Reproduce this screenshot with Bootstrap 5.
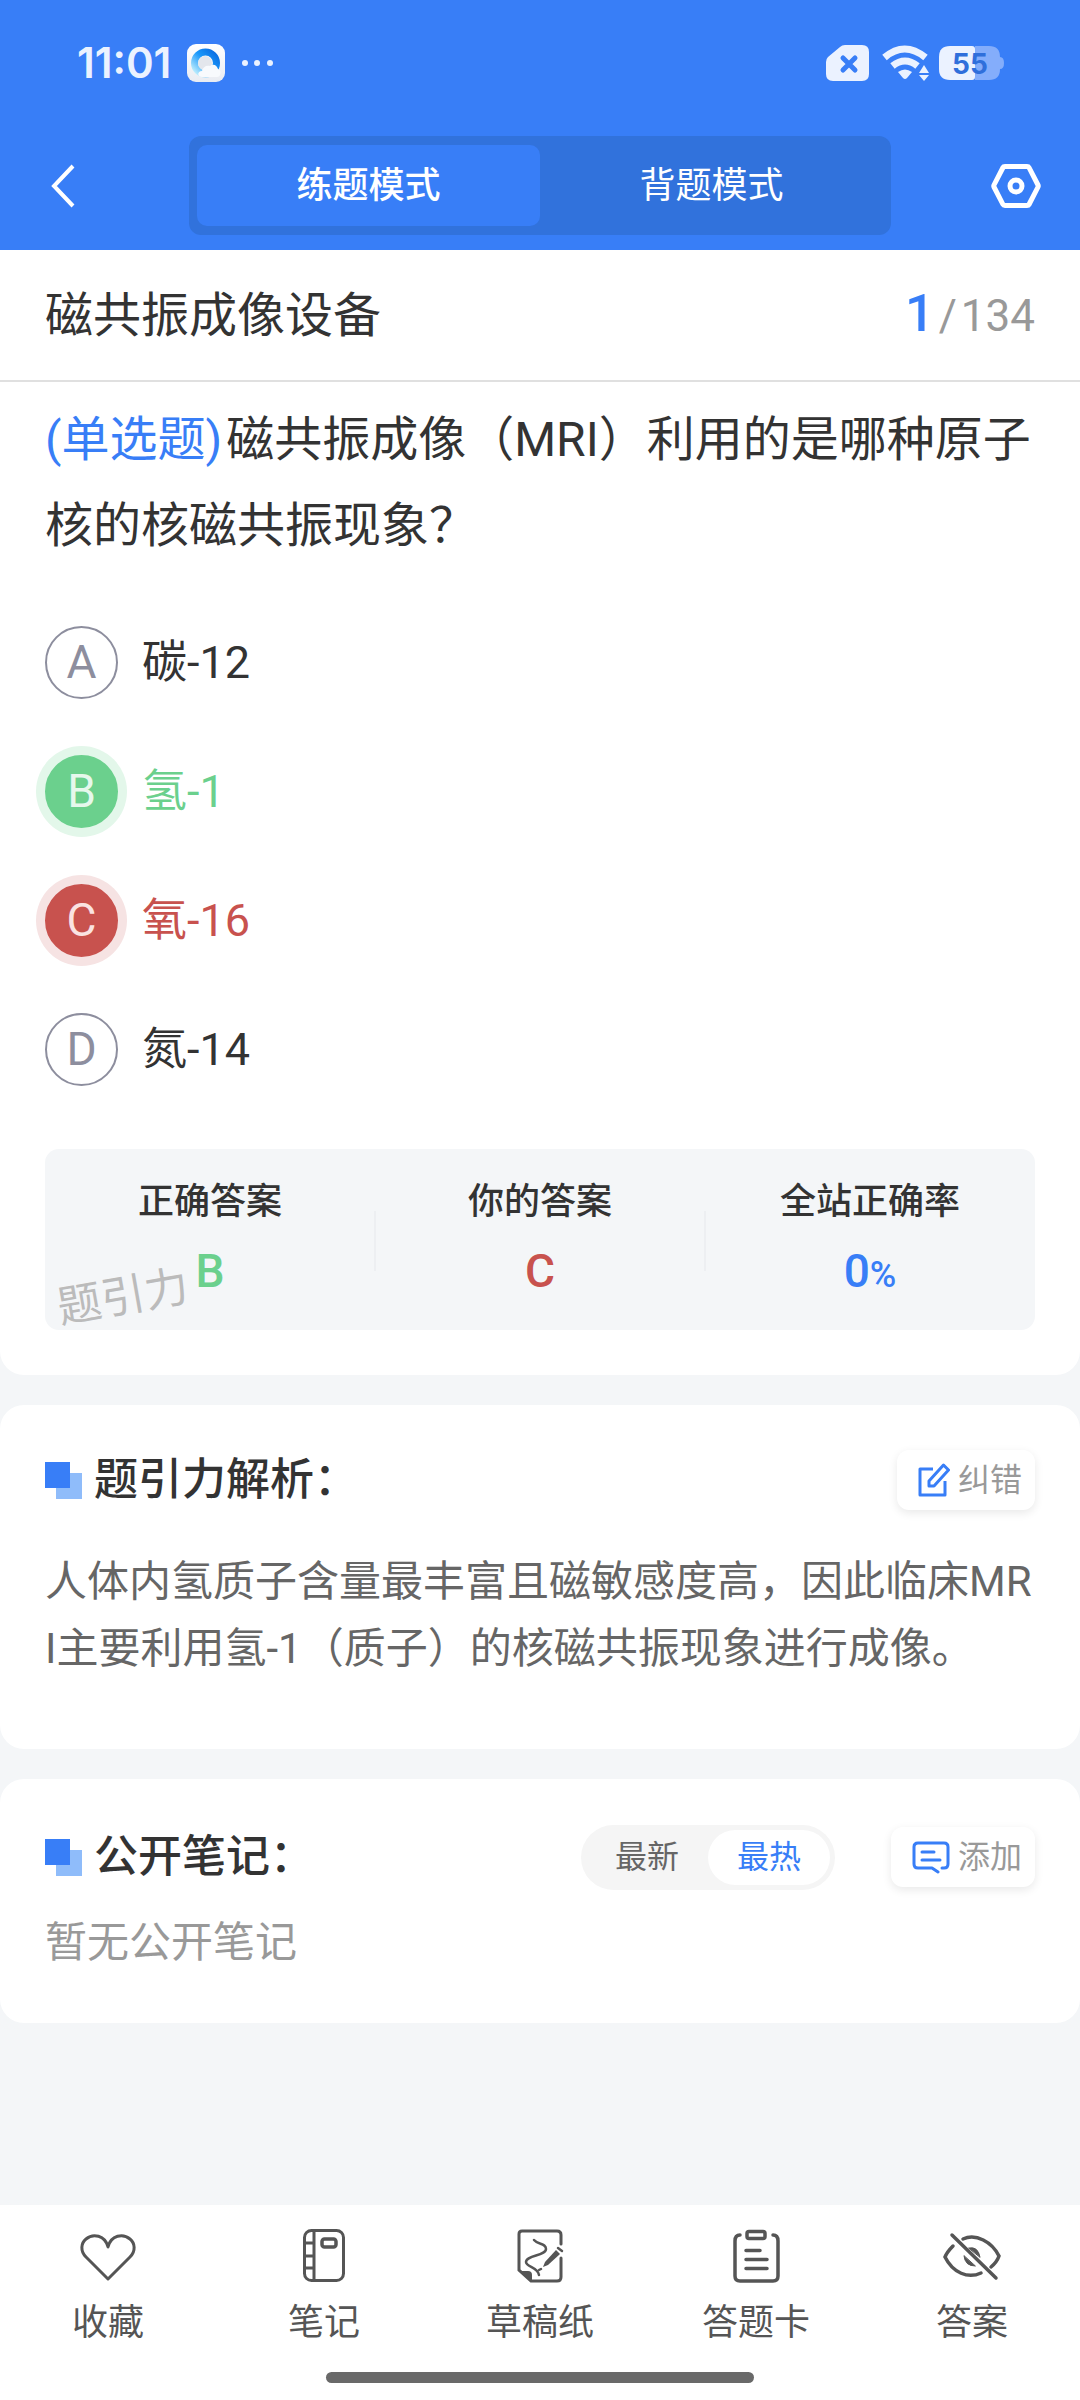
<!DOCTYPE html>
<html lang="zh-CN">
<head>
<meta charset="utf-8">
<meta name="viewport" content="width=device-width, initial-scale=1">
<title>磁共振成像设备</title>
<link href="https://cdn.jsdelivr.net/npm/bootstrap@5.3.0/dist/css/bootstrap.min.css" rel="stylesheet">
<style>
  :root { --brand: #387ef7; --ink: #333; --edge: 45px; }
  body { font-family: Roboto, "Noto Sans CJK SC", sans-serif; background: #f4f6f8; color: var(--ink); }
  button { font-family: inherit; }
  svg { display: block; flex: none; }
  .brand-bg { background: var(--brand); }
  .brand-ink { color: var(--brand); }
  .ok-ink { color: #6bd08d; }
  .bad-ink { color: #c8524e; }
  .soft-ink { color: #999; }

  .status { height: 126px; padding: 0 75px 0 77px; color: #ebf2ff; }
  .clock { font: 600 42px/48px Inter, sans-serif; }
  .topbar { padding: 10px 0 15px; }
  .plain-btn { background: none; border: 0; padding: 0; color: #fff; }
  .bar-side { flex: 0 0 17.5%; }
  .back-side { padding-left: 50px; }
  .gear-side { padding-right: 39px; }
  .modes { flex: 0 0 65%; background: #3172dc; border-radius: 12px; padding: 9px 8px; }
  .modes button { flex: 1 1 0; border: 0; border-radius: 10px; background: none; color: #fff; font-size: 36px; line-height: 79px; padding: 2px 0 0; }
  .modes .on { background: var(--brand); font-weight: 500; }

  .sheet { background: #fff; border-radius: 24px; padding: 0 var(--edge); }
  .sheet-first { border-radius: 0 0 24px 24px; padding-bottom: 45px; }
  .titlebar { background: #fff; border-bottom: 2px solid #e0e0e0; padding: 2px var(--edge) 0; }
  .titlebar h1 { font-size: 48px; line-height: 128px; font-weight: 400; }
  .pos-total { font-size: 44px; line-height: 66px; }
  .pos-now { font-size: 52px; font-weight: 500; line-height: 60px; }
  .ask { font-size: 48px; line-height: 86px; padding-top: 15px; word-break: break-all; }

  .choices { padding: 57px 0 63px; gap: 56px; }
  .choice { gap: 24px; font-size: 45px; line-height: 73px; cursor: pointer; }
  .dot { width: 73px; height: 73px; border-radius: 50%; border: 2px solid #8d8e9e; color: #8d8e9e; font-size: 46px; line-height: 69px; text-align: center; flex: none; }
  .ok .dot { background: #6bd08d; border-color: #6bd08d; color: #e6f8ec; box-shadow: 0 0 0 9px #e3f7ea; }
  .bad .dot { background: #c8524e; border-color: #c8524e; color: #fae3e2; box-shadow: 0 0 0 9px #f6e3e3; }

  .result { background: #f4f6f8; border-radius: 14px; padding: 29px 0 27px; }
  .result .cell { flex: 1 1 0; text-align: center; }
  .result dt { font-size: 36px; line-height: 48px; font-weight: 500; }
  .result dd { font-size: 46px; line-height: 64px; font-weight: 500; margin: 13px 0 0; }
  .result dd span { font-size: 36px; line-height: 36px; }
  .rule { width: 2px; height: 60px; background: #edeff2; margin: 0 -1px; }
  .stamp { left: 12px; bottom: 0; font-size: 44px; line-height: 66px; color: #bbb; transform: rotate(-10deg); }

  .head { gap: 12px; }
  .head h2 { font-size: 44px; line-height: 66px; font-weight: 500; }
  .tool { background: #fff; border: 0; border-radius: 12px; box-shadow: 0 3px 10px rgba(0,0,0,.09); height: 60px; padding: 0 13px 0 21px; gap: 8px; font-size: 32px; line-height: 60px; color: #999; }
  .explain { font-size: 42px; line-height: 67px; color: #666; word-break: break-all; padding: 35px 0 67px; }
  .sort { background: #f5f5f5; border-radius: 33px; padding: 5px; margin-right: 44px; }
  .sort button { border: 0; background: none; border-radius: 28px; font-size: 32px; line-height: 55px; width: 122px; padding: 0; color: #666; }
  .sort .on { background: #fff; color: var(--brand); }
  .none { font-size: 42px; line-height: 66px; padding: 20px 0 47px; color: #999; }
  .stack { gap: 30px; }
  .pad-a { padding-top: 42px; }
  .pad-b { padding-top: 45px; }

  .dock { background: #fff; padding-top: 20px; }
  .dock a { flex: 1 1 0; color: #555; font-size: 36px; line-height: 48px; text-decoration: none; gap: 14px; }
  .homebar { width: 428px; height: 11px; border-radius: 6px; background: #696969; margin: 25px auto 17px; }
</style>
<script src="https://cdn.jsdelivr.net/npm/bootstrap@5.3.0/dist/js/bootstrap.bundle.min.js"></script>
</head>
<body class="d-flex flex-column min-vh-100">

<header class="brand-bg">
  <div class="status d-flex align-items-center justify-content-between">
    <div class="d-flex align-items-center">
      <span class="clock">11:01</span>
      <svg class="ms-3" width="38" height="38" viewBox="0 0 38 38">
        <defs>
          <linearGradient id="ring" x1="1" y1="0" x2="0" y2="1"><stop offset="0" stop-color="#0a6be0"/><stop offset=".45" stop-color="#1a98fb"/><stop offset="1" stop-color="#c9f3fd"/></linearGradient>
          <linearGradient id="tile" x1="0" y1="0" x2="0" y2="1"><stop offset="0" stop-color="#fff"/><stop offset="1" stop-color="#e9ecf2"/></linearGradient>
        </defs>
        <rect width="38" height="38" rx="9" fill="url(#tile)"/>
        <circle cx="18.500" cy="19" r="11" fill="none" stroke="url(#ring)" stroke-width="7"/>
        <circle cx="18" cy="19" r="7" fill="#e3e6ec"/>
        <path d="M15 33c-5 0-5-6 0-6 1-4 4-6 8-5 4-3 7 0 8 3 4 1 3 8-1 8z" fill="#f8fafd"/>
      </svg>
      <svg class="ms-3" width="34" height="8" viewBox="0 0 34 8" fill="#ebf2ff"><circle cx="4" cy="4" r="3"/><circle cx="16" cy="4" r="3"/><circle cx="29" cy="4" r="3"/></svg>
    </div>
    <div class="d-flex align-items-center gap-2">
      <svg width="48" height="36" viewBox="0 0 48 36"><path d="M14 2q2-2 5-2h17q7 0 7 7v22q0 7-7 7H7q-7 0-7-7V17q0-3 2-5z" fill="#ebf2ff"/><path d="M17 13l12 12M29 13L17 25" stroke="#387ef7" stroke-width="5" stroke-linecap="round"/></svg>
      <svg width="49" height="36" viewBox="0 0 49 36"><g fill="none" stroke="#ebf2ff" stroke-width="7"><path d="M2.500 12.500q20-17 41 0"/><path d="M10.500 21q12.500-10 25 0"/></g><path d="M16 27q7-5 14 0l-5 6q-2 2-4 0z" fill="#ebf2ff"/><path d="M42 20l5 8H37zM42 36l5-6H37z" fill="#ebf2ff"/></svg>
      <svg width="66" height="36" viewBox="0 0 66 36"><path d="M36 1h14q11 0 11 11v12q0 11-11 11H36zM61 12q4 0 4 6t-4 6z" fill="#84adfb"/><path d="M11 1h22q3 0 3 3v28q0 3-3 3H11Q0 35 0 24V12Q0 1 11 1z" fill="#ebf2ff"/><text x="31" y="29" text-anchor="middle" font-family="Inter, sans-serif" font-weight="700" font-size="28" fill="#2f6fdb">55</text></svg>
    </div>
  </div>
  <nav class="topbar d-flex align-items-center">
    <div class="bar-side back-side d-flex">
      <button class="plain-btn" type="button" aria-label="返回"><svg width="26" height="46" viewBox="0 0 26 46" fill="none" stroke="#fff" stroke-width="4"><path d="M23 3L4 23l19 20"/></svg></button>
    </div>
    <div class="modes d-flex">
      <button class="on" type="button">练题模式</button>
      <button type="button">背题模式</button>
    </div>
    <div class="bar-side gear-side d-flex justify-content-end">
      <button class="plain-btn" type="button" aria-label="设置"><svg width="50" height="46" viewBox="0 0 50 46" fill="none" stroke="#fff" stroke-width="5" stroke-linejoin="round"><path d="M14 3.500h22q1.500 0 2 1L47 22q.5 1 0 2L38 41.500q-.5 1-2 1H14q-1.500 0-2-1L3 24q-.5-1 0-2L12 4.500q.5-1 2-1z"/><circle cx="25" cy="23" r="6"/></svg></button>
    </div>
  </nav>
</header>

<main class="stack d-flex flex-column mb-4">
  <div>
    <div class="titlebar d-flex align-items-center justify-content-between">
      <h1 class="m-0">磁共振成像设备</h1>
      <div class="pos-total soft-ink"><span class="pos-now brand-ink me-1">1</span><span class="me-1">/</span>134</div>
    </div>
    <section class="sheet sheet-first">
      <p class="ask m-0"><span class="brand-ink me-1">(单选题)</span>磁共振成像（MRI）利用的是哪种原子核的核磁共振现象？</p>
      <div class="choices d-flex flex-column">
        <div><input class="btn-check" type="radio" name="answer" id="a"><label class="choice d-flex align-items-center" for="a"><span class="dot">A</span>碳-12</label></div>
        <div><input class="btn-check" type="radio" name="answer" id="b"><label class="choice ok ok-ink d-flex align-items-center" for="b"><span class="dot">B</span>氢-1</label></div>
        <div><input class="btn-check" type="radio" name="answer" id="c" checked><label class="choice bad bad-ink d-flex align-items-center" for="c"><span class="dot">C</span>氧-16</label></div>
        <div><input class="btn-check" type="radio" name="answer" id="d"><label class="choice d-flex align-items-center" for="d"><span class="dot">D</span>氮-14</label></div>
      </div>
      <div class="result position-relative">
        <dl class="d-flex align-items-center m-0">
          <div class="cell"><dt>正确答案</dt><dd class="ok-ink">B</dd></div>
          <div class="rule"></div>
          <div class="cell"><dt>你的答案</dt><dd class="bad-ink">C</dd></div>
          <div class="rule"></div>
          <div class="cell"><dt>全站正确率</dt><dd class="brand-ink">0<span>%</span></dd></div>
        </dl>
        <span class="stamp position-absolute">题引力</span>
      </div>
    </section>
  </div>

  <section class="sheet pad-a">
    <div class="head d-flex align-items-center">
      <svg width="37" height="37" viewBox="0 0 37 37"><path d="M11 11h26v26H11z" fill="#8fbcfa"/><path d="M0 0h25v26H0z" fill="#387ef7"/></svg>
      <h2 class="m-0 me-auto">题引力解析：</h2>
      <button class="tool d-flex align-items-center" type="button">
        <svg width="32" height="34" viewBox="0 0 32 34" fill="none" stroke="#387ef7" stroke-width="3"><path d="M15 6H2v26h25V18" stroke-linejoin="round"/><path d="M25.500 2l5 5L16 23h-5v-5z" stroke-linejoin="round"/></svg>纠错
      </button>
    </div>
    <p class="explain m-0">人体内氢质子含量最丰富且磁敏感度高，因此临床MRI主要利用氢-1（质子）的核磁共振现象进行成像。</p>
  </section>

  <section class="sheet pad-b">
    <div class="head d-flex align-items-center">
      <svg width="37" height="37" viewBox="0 0 37 37"><path d="M11 11h26v26H11z" fill="#8fbcfa"/><path d="M0 0h25v26H0z" fill="#387ef7"/></svg>
      <h2 class="m-0 me-auto">公开笔记：</h2>
      <div class="sort d-flex">
        <button type="button">最新</button>
        <button class="on" type="button">最热</button>
      </div>
      <button class="tool d-flex align-items-center" type="button">
        <svg width="38" height="34" viewBox="0 0 38 34" fill="none" stroke="#387ef7" stroke-width="3" stroke-linecap="round" stroke-linejoin="round"><path d="M26 32l-6-4H6q-4 0-4-4V7q0-4 4-4h26q4 0 4 4v17q0 4-4 4h-2M10 12h12M10 20h18"/></svg>添加
      </button>
    </div>
    <p class="none m-0">暂无公开笔记</p>
  </section>
</main>

<footer class="dock mt-auto">
  <nav class="d-flex">
    <a href="#" class="d-flex flex-column align-items-center">
      <svg width="60" height="60" viewBox="0 0 60 60" fill="none" stroke="#555" stroke-width="3" stroke-linejoin="round"><path d="M30 54L8 32C2 26 3 18 8 14c7-6 19-4 22 8 3-12 15-14 22-8 5 4 6 12 0 18z"/></svg>收藏</a>
    <a href="#" class="d-flex flex-column align-items-center">
      <svg width="60" height="60" viewBox="0 0 60 60" fill="none" stroke="#555" stroke-width="3"><rect x="10.500" y="5.500" width="39" height="50" rx="7"/><path d="M20 5v50M10 18h10M10 31h10M10 43h10"/><rect x="28" y="14" width="14" height="8" rx="2.500" stroke-width="3.500"/></svg>笔记</a>
    <a href="#" class="d-flex flex-column align-items-center">
      <svg width="60" height="60" viewBox="0 0 60 60" fill="none" stroke="#555" stroke-width="3" stroke-linecap="round"><path d="M51 19V10q0-4-4-4H12q-3 0-3 3v36l12 11h26q4 0 4-4V33"/><path d="M9 46h9q4 0 4 4v7z" fill="#555" stroke="none"/><path d="M24 15C28 20 36 18 36 24C36 31 16 30 16 37C16 42 28 42 29 50" stroke-width="2.500"/><path d="M33 42l2-5 11-12 4 4-12 11z" fill="#555" stroke="none"/><path d="M48 23l4 3M29 45l2-1" stroke-width="2.500"/></svg>草稿纸</a>
    <a href="#" class="d-flex flex-column align-items-center">
      <svg width="60" height="60" viewBox="0 0 60 60" fill="none" stroke="#555" stroke-width="3.500" stroke-linecap="round"><path d="M14 10q-5 0-5 6v35q0 5 5 5h33q5 0 5-5V16q0-6-5-6"/><rect x="21" y="6.500" width="18" height="7" rx="2"/><path d="M20 25.500h14M20 34.500h21M20 43.500h21"/></svg>答题卡</a>
    <a href="#" class="d-flex flex-column align-items-center">
      <svg width="60" height="60" viewBox="0 0 60 60" fill="none" stroke="#555" stroke-width="3.500" stroke-linecap="round"><path d="M10 10l44 43"/><path d="M21 14C34 8 50 17 57 31q-2 6-8 11M11 21q-6 6-8 11C11 48 26 54 39 48"/><path d="M27 23q9-2 11 9zM22 31q1 10 11 10z" fill="#555" stroke-width="1"/></svg>答案</a>
  </nav>
  <div class="homebar"></div>
</footer>
</body>
</html>
